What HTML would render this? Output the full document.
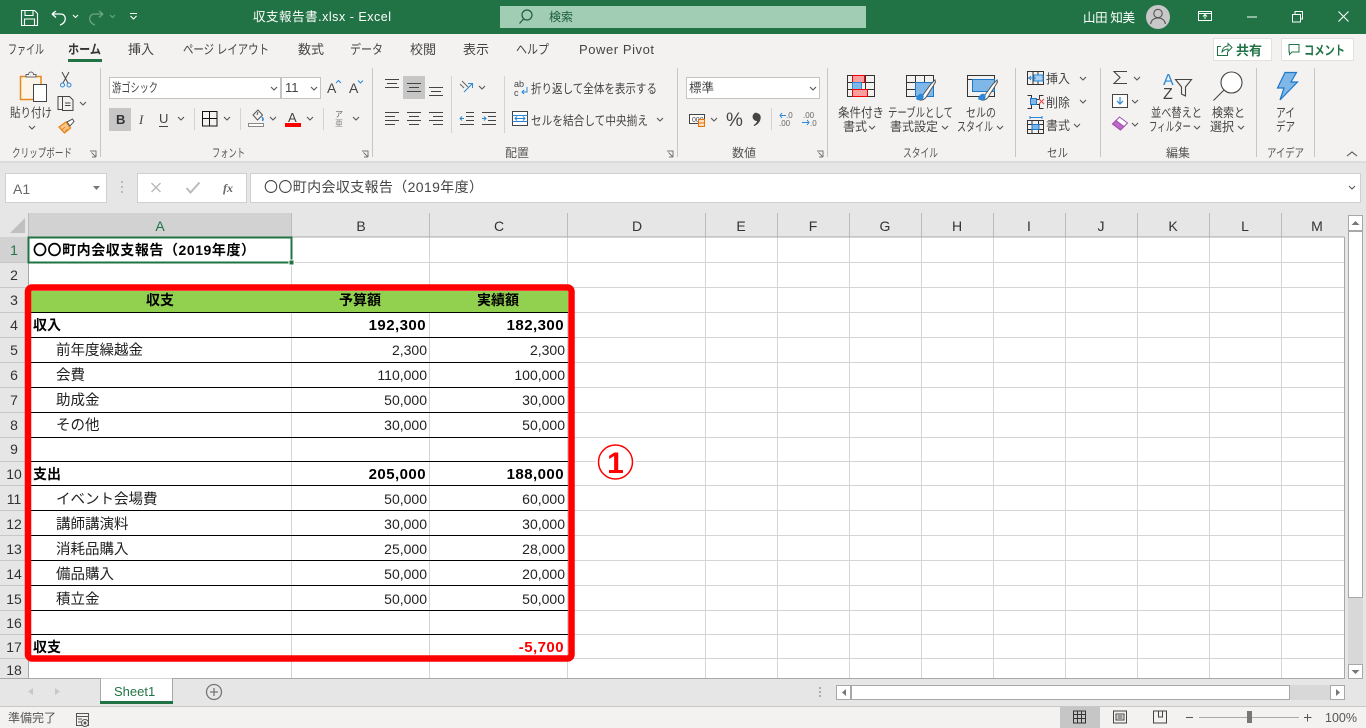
<!DOCTYPE html>
<html lang="ja"><head><meta charset="utf-8"><title>Excel</title>
<style>
html,body{margin:0;padding:0;background:#fff;width:1366px;height:728px;overflow:hidden}
svg{display:block}
text{font-family:"Liberation Sans","Noto Sans CJK JP",sans-serif;fill:#333;font-size:12px;text-spacing-trim:space-all}
.r text{font-size:12.5px;fill:#444}
.lb text{font-size:12px;fill:#555}
.tab text{font-size:13px;fill:#444}
.rn text{font-size:14px;fill:#333;text-anchor:middle}
.d text{font-size:14.5px;fill:#222}
.b text{font-size:14px;font-weight:700;fill:#000}
.n text{font-size:14px;fill:#222;text-anchor:end}
.nb text{font-size:15px;font-weight:700;fill:#000;text-anchor:end;letter-spacing:.45px}
.ic{fill:none;stroke:#444;stroke-width:1}
.ch{fill:none;stroke:#555;stroke-width:1.1}
</style></head><body>
<svg width="1366" height="728" viewBox="0 0 1366 728" xmlns="http://www.w3.org/2000/svg">
<defs>
<path id="cv" d="M0 0l3 3 3-3" class="ch"/>
<path id="lc" d="M0 0h6v6M1.500 1.500l4 4M2 6h4" fill="none" stroke="#777"/>
</defs>
<!-- backgrounds -->
<rect width="1366" height="34" fill="#217346"/>
<rect y="34" width="1366" height="127" fill="#f3f2f1"/>
<rect y="161" width="1366" height="52" fill="#e6e6e6"/>
<rect y="161" width="1366" height="2" fill="#dcdcdc"/>
<rect y="213" width="1366" height="465" fill="#e6e6e6"/>
<rect x="29" y="237" width="1315" height="441" fill="#fff"/>
<rect y="678" width="1366" height="29" fill="#e6e6e6"/>
<rect y="707" width="1366" height="21" fill="#f3f2f1"/>
<path d="M0 706.500h1366" stroke="#c8c8c8"/>

<!-- title bar -->
<g fill="none" stroke="#fff" stroke-width="1.100">
<path d="M21.500 10.500h13l3 3v12h-16zM25 10.500v5h8v-5M24.500 25v-6h10v6"/>
<path d="M52 14l4-3M52 14l4 3.500M52 14h8.500c6.500 0 6.500 9-.5 11" stroke-width="1.300"/>
<path d="M73 15l2.500 2.500L78 15"/>
<path d="M103 14l-4-3M103 14l-4 3.500M103 14h-8.500c-6.500 0-6.500 9 .5 11" stroke="#6da486" stroke-width="1.300"/>
<path d="M110 15l2.500 2.500L115 15" stroke="#6da486"/>
<path d="M130 13.500h7M130.500 16l3 3 3-3"/>
</g>
<text x="253" y="21" style="fill:#fff;font-size:12.500px" textLength="138" lengthAdjust="spacing">収支報告書.xlsx  -  Excel</text>
<rect x="500" y="6" width="366" height="22" fill="#a0cdb4"/>
<circle cx="527" cy="15" r="5" fill="none" stroke="#1f5c3b" stroke-width="1.200"/><path d="M523.500 19l-4 4.500" stroke="#1f5c3b" stroke-width="1.200"/>
<text x="549" y="21" style="fill:#1d5c3a;font-size:12px">検索</text>
<text x="1083" y="22" style="fill:#fff;font-size:12.500px" textLength="52" lengthAdjust="spacing">山田 知美</text>
<circle cx="1158" cy="17" r="12" fill="#c8c8c8"/>
<circle cx="1158" cy="13.500" r="4.200" fill="none" stroke="#555" stroke-width="1.100"/><path d="M1150.500 24c1-4.500 4-6 7.500-6s6.500 1.500 7.500 6" fill="none" stroke="#555" stroke-width="1.100"/>
<g fill="none" stroke="#fff" stroke-width="1">
<path d="M1198.500 11.500h13v9h-13zM1198.500 13.500h13M1205 19v-4M1203 16.500l2-2 2 2"/>
<path d="M1247 17h10"/>
<path d="M1292.500 14.500h8v7.500h-8zM1295 14v-2.500h7.500V19h-2"/>
<path d="M1338.500 11.500l10 10M1348.500 11.500l-10 10" stroke-width="1.100"/>
</g>

<!-- tabs -->
<g class="tab">
<text x="8" y="54" textLength="36" lengthAdjust="spacingAndGlyphs">ファイル</text>
<text x="68" y="54" textLength="33" lengthAdjust="spacingAndGlyphs" style="font-weight:700;fill:#333">ホーム</text>
<text x="128" y="54" textLength="26" lengthAdjust="spacingAndGlyphs">挿入</text>
<text x="183" y="54" textLength="86" lengthAdjust="spacingAndGlyphs">ページ レイアウト</text>
<text x="298" y="54" textLength="26" lengthAdjust="spacingAndGlyphs">数式</text>
<text x="350" y="54" textLength="33" lengthAdjust="spacingAndGlyphs">データ</text>
<text x="410" y="54" textLength="26" lengthAdjust="spacingAndGlyphs">校閲</text>
<text x="463" y="54" textLength="26" lengthAdjust="spacingAndGlyphs">表示</text>
<text x="516" y="54" textLength="33" lengthAdjust="spacingAndGlyphs">ヘルプ</text>
<text x="579" y="54" textLength="75" lengthAdjust="spacing">Power Pivot</text>
</g>
<rect x="68" y="59" width="34" height="3" fill="#217346"/>
<rect x="1213.500" y="38.500" width="58" height="22" fill="#fff" stroke="#e3e1df"/>
<path d="M1221 46.500h-3.500v9h10v-3.500M1222 52c.5-4 3-6 6-6v-2.500l4 4-4 4v-2.500c-2 0-4 1-6 3z" fill="none" stroke="#217346"/>
<text x="1236" y="55" style="fill:#217346;font-weight:700;font-size:13px">共有</text>
<rect x="1281.500" y="38.500" width="72" height="22" fill="#fff" stroke="#e3e1df"/>
<path d="M1289 44.500h10v7.500h-7l-2.500 2.500v-2.500h-.5z" fill="none" stroke="#217346"/>
<text x="1304" y="55" style="fill:#217346;font-weight:700;font-size:13px" textLength="41" lengthAdjust="spacingAndGlyphs">コメント</text>

<!-- separators -->
<g stroke="#c6c6c6">
<path d="M100.500 68v89M372.500 68v89M677.500 68v89M827.500 68v89M1015.500 68v89M1100.500 68v89M1256.500 68v89M1314.500 68v89"/>
<path d="M194.500 108v22M240.500 108v22M323.500 108v22M504.500 76v57M771.500 108v22M451.500 76v57" stroke="#d2d2d2"/>
</g>

<!-- clipboard -->
<path d="M20.500 76.500h20.500v23H20.500z" fill="#fdf4e8" stroke="#e8871e" stroke-width="1.500"/>
<path d="M26 76.500v-2h2.500a2.500 2.500 0 0 1 5 0H36v2.500H26z" fill="#f3f2f1" stroke="#666"/>
<rect x="33.500" y="84.500" width="13" height="17" fill="#fff" stroke="#444"/>
<g class="r"><text x="10" y="117" textLength="42" lengthAdjust="spacingAndGlyphs">貼り付け</text></g>
<use href="#cv" x="29" y="126"/>
<path d="M62 72l6 11M69 72l-6 11" stroke="#444" fill="none"/><circle cx="62.500" cy="85" r="2" fill="none" stroke="#2b88d8"/><circle cx="69" cy="85" r="2" fill="none" stroke="#2b88d8"/>
<path d="M62.500 96.500h-4.500v13h4M62.500 96.500h7l3.500 3.500v10.500H62.500zM65 103h5.500M65 105.500h5.500" class="ic"/>
<use href="#cv" x="80" y="102"/>
<path d="M59 127l7-5 4.500 6-6 5z" fill="#f9c68a" stroke="#e8871e" stroke-width="1.300"/><path d="M62 130l3-3M65 131.500l2.500-2.500" stroke="#e8871e"/><path d="M67 122l5.500-3 1.500 2.500-4 4.500z" fill="#fff" stroke="#555"/>
<g class="lb"><text x="12" y="157" textLength="60" lengthAdjust="spacingAndGlyphs">クリップボード</text>
<text x="212" y="157" textLength="33" lengthAdjust="spacingAndGlyphs">フォント</text>
<text x="505" y="157">配置</text>
<text x="732" y="157">数値</text>
<text x="903" y="157" textLength="35" lengthAdjust="spacingAndGlyphs">スタイル</text>
<text x="1047" y="157" textLength="21" lengthAdjust="spacingAndGlyphs">セル</text>
<text x="1166" y="157">編集</text>
<text x="1267" y="157" textLength="37" lengthAdjust="spacingAndGlyphs">アイデア</text></g>
<use href="#lc" x="90" y="151"/><use href="#lc" x="362" y="151"/><use href="#lc" x="667" y="151"/><use href="#lc" x="817" y="151"/>
<path d="M1347 156l5-4 5 4" fill="none" stroke="#555" stroke-width="1.100"/>

<!-- font -->
<rect x="109.500" y="77.500" width="171" height="21" fill="#fff" stroke="#c4c4c4"/>
<rect x="281.500" y="77.500" width="39" height="21" fill="#fff" stroke="#c4c4c4"/>
<g class="r"><text x="112" y="92" textLength="46" lengthAdjust="spacingAndGlyphs">游ゴシック</text><text x="285" y="92" style="font-size:13px">11</text></g>
<use href="#cv" x="271" y="87"/><use href="#cv" x="311" y="87"/>
<text x="327" y="93" style="font-size:14px;fill:#444">A</text><path d="M336 83l2.500-2.500L341 83" fill="none" stroke="#2b88d8"/>
<text x="349" y="93" style="font-size:14px;fill:#444">A</text><path d="M358 80.500l2.500 2.500 2.500-2.500" fill="none" stroke="#2b88d8"/>
<rect x="109" y="108" width="22" height="23" fill="#c6c6c6"/>
<text x="116" y="124" style="font-size:13px;font-weight:700;fill:#333">B</text>
<text x="139" y="124" style="font-size:13px;font-style:italic;fill:#444;font-family:'Liberation Serif',serif">I</text>
<text x="159" y="123" style="font-size:13px;fill:#444">U</text><path d="M159 126.500h9" stroke="#444"/>
<use href="#cv" x="178" y="117"/>
<path d="M202.500 111.500h14.500v14.500h-14.500zM202.500 118.500h14.500M209.500 111.500v14.500" fill="none" stroke="#111"/>
<use href="#cv" x="224" y="117"/>
<path d="M253 115l5-5 4.500 5-5 5zM257 115l1-3" fill="none" stroke="#555"/><path d="M262 117c1 1.500 2 3 0 3.500" fill="none" stroke="#2b88d8" stroke-width="1.500"/>
<rect x="248.500" y="123.500" width="15" height="3" fill="#fff" stroke="#888"/>
<use href="#cv" x="270" y="117"/>
<text x="288" y="122" style="font-size:13px;fill:#444">A</text>
<rect x="285" y="123" width="16" height="4" fill="#f00"/>
<use href="#cv" x="307" y="117"/>
<text x="335" y="117" style="font-size:8px;fill:#666">ア</text><text x="335" y="126" style="font-size:8px;fill:#888">亜</text>
<use href="#cv" x="353" y="117"/>

<!-- alignment -->
<rect x="403" y="76" width="22" height="23" fill="#c6c6c6"/>
<g stroke="#444" fill="none">
<path d="M385 79.500h14M387 83.500h10M385 87.500h14"/>
<path d="M407 83.500h14M409 87.500h10M407 91.500h14"/>
<path d="M429 87.500h14M431 91.500h10M429 95.500h14"/>
<path d="M385 112.500h14M385 116.500h10M385 120.500h14M385 124.500h10"/>
<path d="M407 112.500h14M409 116.500h10M407 120.500h14M409 124.500h10"/>
<path d="M429 112.500h14M433 116.500h10M429 120.500h14M433 124.500h10"/>
<path d="M466 112.500h8M466 116.500h8M466 120.500h8M460 124.500h14"/>
<path d="M482 112.500h14M488 116.500h8M488 120.500h8M482 124.500h14"/>
</g>
<path d="M460 118.500h4M462 116.500l-2 2 2 2M482 118.500h4M484 116.500l2 2-2 2" fill="none" stroke="#2b88d8"/>
<path d="M462 81l6 6M460 84l4 4" stroke="#666" fill="none"/><path d="M464 92l8-8M468 83.500h4.500V88" stroke="#2b88d8" fill="none"/>
<use href="#cv" x="479" y="86"/>
<text x="514" y="87" style="font-size:9px;fill:#444">ab</text><text x="514" y="96" style="font-size:9px;fill:#444">c</text>
<path d="M527 87v5h-5M524 90l-2 2 2 2" fill="none" stroke="#2b88d8"/>
<g class="r"><text x="531" y="93" textLength="126" lengthAdjust="spacingAndGlyphs">折り返して全体を表示する</text>
<text x="531" y="125" textLength="117" lengthAdjust="spacingAndGlyphs">セルを結合して中央揃え</text></g>
<rect x="512.500" y="111.500" width="15" height="14" fill="#fff" stroke="#444"/>
<path d="M512.500 115.500h15M512.500 121.500h15" stroke="#2b88d8"/><path d="M515 118.500h10M517 116.500l-2 2 2 2M523 116.500l2 2-2 2" fill="none" stroke="#2b88d8"/>
<use href="#cv" x="657" y="118"/>

<!-- number -->
<rect x="686.500" y="77.500" width="133" height="21" fill="#fff" stroke="#c4c4c4"/>
<text x="689" y="92" style="font-size:12.500px;fill:#444">標準</text>
<use href="#cv" x="810" y="87"/>
<rect x="689.500" y="114.500" width="15" height="9" fill="#fff" stroke="#444"/>
<text x="692" y="122" style="font-size:7px;fill:#444">000</text>
<rect x="698.500" y="119.500" width="6" height="7" fill="#fde0c2" stroke="#e8740c"/><path d="M698.500 123h6" stroke="#e8740c"/>
<use href="#cv" x="711" y="118"/>
<text x="726" y="126" style="font-size:19px;fill:#444">%</text>
<path d="M756.500 113a4.200 4.200 0 0 1 4.200 4.500c0 3.500-2.500 7-6.500 8.500l-.6-1c1.800-1 3.100-2.300 3.500-4a4.200 4.200 0 1 1-.6-8.500z" fill="#444"/>
<text x="786" y="118" style="font-size:8px;fill:#666">.0</text><text x="779" y="126" style="font-size:8px;fill:#666">.00</text>
<path d="M780 115.500h6M782 113l-2 2.500 2 2.500" fill="none" stroke="#2b88d8"/>
<text x="803" y="118" style="font-size:8px;fill:#666">.00</text><text x="810" y="126" style="font-size:8px;fill:#666">.0</text>
<path d="M802 122.500h7M807 120l2 2.500-2 2.500" fill="none" stroke="#2b88d8"/>

<!-- styles -->
<g fill="none" stroke="#333">
<path d="M847.500 75.500h27v21h-27zM847.500 82.500h27M847.500 89.500h27M856.500 75.500v21M865.500 75.500v21"/>
</g>
<rect x="852.500" y="75.500" width="12" height="7" fill="#f8a0a0" stroke="#e00"/><rect x="852.500" y="82.500" width="9" height="7" fill="#7fb8e8" stroke="#2b88d8"/><rect x="852.500" y="89.500" width="15" height="7" fill="#f8a0a0" stroke="#e00"/>
<g fill="none" stroke="#333"><path d="M906.500 75.500h27v21h-27zM906.500 82.500h27M906.500 89.500h27M915.500 75.500v21M924.500 75.500v21"/></g>
<rect x="915.500" y="82.500" width="18" height="14" fill="#7fb8e8" stroke="#1e78c8"/>
<path d="M920 99l11-15 4-4 .5 2-3 5-7 11c-2 2-6 3-7 1z" fill="#fff" stroke="#555"/><path d="M916 99c1-3 3-6 6-5 2 .5 2 3 1 5-1 1-5 2-7 0z" fill="#2b88d8"/>
<g fill="none" stroke="#333"><path d="M967.500 75.500h27v21h-27zM967.500 79.500h27"/></g>
<rect x="972.500" y="79.500" width="22" height="12" fill="#7fb8e8" stroke="#1e78c8"/>
<path d="M982 99l11-15 4-4 .5 2-3 5-7 11c-2 2-6 3-7 1z" fill="#fff" stroke="#555"/><path d="M978 99c1-3 3-6 6-5 2 .5 2 3 1 5-1 1-5 2-7 0z" fill="#2b88d8"/>
<g class="r">
<text x="838" y="117" textLength="46" lengthAdjust="spacingAndGlyphs">条件付き</text><text x="843" y="131" textLength="24" lengthAdjust="spacingAndGlyphs">書式</text>
<text x="888" y="117" textLength="65" lengthAdjust="spacingAndGlyphs">テーブルとして</text><text x="890" y="131" textLength="48" lengthAdjust="spacingAndGlyphs">書式設定</text>
<text x="966" y="117" textLength="30" lengthAdjust="spacingAndGlyphs">セルの</text><text x="957" y="131" textLength="36" lengthAdjust="spacingAndGlyphs">スタイル</text>
<text x="1046" y="83" textLength="24" lengthAdjust="spacingAndGlyphs">挿入</text><text x="1046" y="107" textLength="24" lengthAdjust="spacingAndGlyphs">削除</text><text x="1046" y="130" textLength="24" lengthAdjust="spacingAndGlyphs">書式</text>
<text x="1151" y="117" textLength="51" lengthAdjust="spacingAndGlyphs">並べ替えと</text><text x="1149" y="131" textLength="42" lengthAdjust="spacingAndGlyphs">フィルター</text>
<text x="1212" y="117" textLength="33" lengthAdjust="spacingAndGlyphs">検索と</text><text x="1210" y="131" textLength="24" lengthAdjust="spacingAndGlyphs">選択</text>
<text x="1276" y="117" textLength="19" lengthAdjust="spacingAndGlyphs">アイ</text><text x="1276" y="131" textLength="19" lengthAdjust="spacingAndGlyphs">デア</text>
</g>
<use href="#cv" x="869" y="126"/><use href="#cv" x="942" y="126"/><use href="#cv" x="997" y="126"/>

<!-- cells -->
<g fill="none" stroke="#333">
<path d="M1027.500 71.500h16v13h-16zM1027.500 78h16M1033 71.500v13M1038 71.500v13"/>
<path d="M1027.500 95.500h4v4h8v-4h4M1027.500 108.500h4v-4h8v4h4"/>
<path d="M1027.500 120.500h16v13h-16zM1027.500 124.500h16M1027.500 129.500h16M1032 120.500v13M1038.500 120.500v13"/>
</g>
<rect x="1034" y="75" width="9" height="6" fill="#a8cff0" stroke="#2b88d8"/><path d="M1029 78h7M1031 76l-2 2 2 2" fill="none" stroke="#2b88d8"/>
<rect x="1030.500" y="98.500" width="6" height="6" fill="#7fb8e8" stroke="#1e78c8"/><path d="M1039 99l5 5M1044 99l-5 5" stroke="#e44" fill="none"/>
<rect x="1032" y="124.500" width="7" height="5" fill="#7fb8e8" stroke="#1e78c8"/><path d="M1030 117.500h12M1030 116v3M1042 116v3" stroke="#2b88d8" fill="none"/>
<use href="#cv" x="1080" y="77"/><use href="#cv" x="1080" y="100"/><use href="#cv" x="1074" y="124"/>

<!-- editing -->
<path d="M1127 71.500h-13l6 6-6 6h13" fill="none" stroke="#444" stroke-width="1.100"/>
<use href="#cv" x="1134" y="77"/>
<rect x="1112.500" y="94.500" width="15" height="13" fill="#fff" stroke="#444"/><path d="M1120 97v7M1117 101l3 3 3-3" fill="none" stroke="#2b88d8" stroke-width="1.200"/>
<use href="#cv" x="1132" y="100"/>
<path d="M1112.500 124l7-7 8 6-7 7z" fill="#fff" stroke="#a24bb0"/><path d="M1112.500 124l3.500-3.500 8 6-3.500 3.500z" fill="#bb6ac7" stroke="#a24bb0"/>
<use href="#cv" x="1132" y="123"/>
<text x="1163" y="85" style="font-size:16px;fill:#2b88d8">A</text>
<text x="1163" y="99" style="font-size:16px;fill:#444">Z</text>
<path d="M1175.500 79.500h16l-6 7.500v9l-4-2v-7z" fill="none" stroke="#444" stroke-width="1.100"/>
<use href="#cv" x="1194" y="126"/><use href="#cv" x="1238" y="126"/>
<circle cx="1231.500" cy="82.500" r="10.500" fill="#fff" stroke="#444" stroke-width="1.100"/><path d="M1224 90l-10.500 10.500" stroke="#444" stroke-width="1.100"/>
<path d="M1285 72.500h11.500l-5.500 9.500h6.500L1280 100l4-12h-6.500z" fill="#7fb8e8" stroke="#1e78c8" stroke-width="1.200"/>

<!-- formula bar -->
<rect x="5.500" y="173.500" width="101" height="29" fill="#fff" stroke="#d0d0d0"/>
<text x="13" y="194" style="font-size:14px;fill:#666">A1</text>
<path d="M93 186h7l-3.500 4z" fill="#777"/>
<path d="M122 181v2M122 186v2M122 191v2" stroke="#aaa" stroke-width="1.500"/>
<rect x="137.500" y="173.500" width="109" height="29" fill="#fff" stroke="#d0d0d0"/>
<path d="M151.500 183l9 9M160.500 183l-9 9" stroke="#bbb" stroke-width="1.500" fill="none"/>
<path d="M186.500 188l4 4.500 9-10" stroke="#bbb" stroke-width="2" fill="none"/>
<text x="223" y="192" style="font-size:12px;font-style:italic;font-weight:700;fill:#666;font-family:'Liberation Serif',serif">fx</text>
<rect x="250.500" y="173.500" width="1110" height="29" fill="#fff" stroke="#d0d0d0"/>
<text x="264" y="192" style="font-size:14px;fill:#444" textLength="219" lengthAdjust="spacing">〇〇町内会収支報告（2019年度）</text>
<path d="M1349 186l3 3 3-3" class="ch"/>

<!-- column headers -->
<rect x="29" y="213" width="263" height="24" fill="#d2d2d2"/>
<path d="M10 233h15v-15z" fill="#c0c0c0"/>
<g stroke="#bcbcbc"><path d="M28.500 213v24M291.500 213v24M429.500 213v24M567.500 213v24M705.500 213v24M777.500 213v24M849.500 213v24M921.500 213v24M993.500 213v24M1065.500 213v24M1137.500 213v24M1209.500 213v24M1281.500 213v24"/></g>
<g class="rn">
<text x="160" y="231" style="fill:#217346">A</text><text x="361" y="231">B</text><text x="499" y="231">C</text><text x="637" y="231">D</text><text x="741" y="231">E</text><text x="813" y="231">F</text><text x="885" y="231">G</text><text x="957" y="231">H</text><text x="1029" y="231">I</text><text x="1101" y="231">J</text><text x="1173" y="231">K</text><text x="1245" y="231">L</text><text x="1317" y="231">M</text>
</g>

<!-- row headers -->
<rect x="0" y="237" width="28" height="25" fill="#d2d2d2"/>
<g stroke="#c8c8c8"><path d="M0 262.500h28M0 287.500h28M0 312.500h28M0 337.500h28M0 362.500h28M0 387.500h28M0 412.500h28M0 437.500h28M0 461.500h28M0 485.500h28M0 510.500h28M0 535.500h28M0 560.500h28M0 585.500h28M0 610.500h28M0 634.500h28M0 658.500h28"/></g>
<g class="rn">
<text x="14" y="255" style="fill:#217346">1</text><text x="14" y="280">2</text><text x="14" y="305">3</text><text x="14" y="330">4</text><text x="14" y="355">5</text><text x="14" y="380">6</text><text x="14" y="405">7</text><text x="14" y="430">8</text><text x="14" y="454">9</text><text x="14" y="479">10</text><text x="14" y="504">11</text><text x="14" y="529">12</text><text x="14" y="554">13</text><text x="14" y="579">14</text><text x="14" y="604">15</text><text x="14" y="628">16</text><text x="14" y="652">17</text><text x="14" y="675">18</text>
</g>

<!-- gridlines -->
<g stroke="#d4d4d4">
<path d="M291.500 237v441M429.500 237v441M567.500 237v441M705.500 237v441M777.500 237v441M849.500 237v441M921.500 237v441M993.500 237v441M1065.500 237v441M1137.500 237v441M1209.500 237v441M1281.500 237v441"/>
<path d="M29 262.500h1315M29 287.500h1315M29 312.500h1315M29 337.500h1315M29 362.500h1315M29 387.500h1315M29 412.500h1315M29 437.500h1315M29 461.500h1315M29 485.500h1315M29 510.500h1315M29 535.500h1315M29 560.500h1315M29 585.500h1315M29 610.500h1315M29 634.500h1315M29 658.500h1315"/>
</g>
<path d="M28.500 237h1316M1344.500 237v441M28.500 237v441M0 678.500h1345" fill="none" stroke="#a8a8a8"/>

<!-- table -->
<rect x="31" y="291" width="537" height="21" fill="#92d050"/>
<path d="M29 312.500h539M29 337.500h539M29 362.500h539M29 387.500h539M29 412.500h539M29 437.500h539M29 461.500h539M29 485.500h539M29 510.500h539M29 535.500h539M29 560.500h539M29 585.500h539M29 610.500h539M29 634.500h539" stroke="#000"/>

<g class="b">
<text x="33" y="255" textLength="222" lengthAdjust="spacing">〇〇町内会収支報告（2019年度）</text>
<text x="146" y="305">収支</text><text x="339" y="305">予算額</text><text x="477" y="305">実績額</text>
<text x="33" y="330">収入</text><text x="33" y="479">支出</text><text x="33" y="652">収支</text>
</g>
<g class="d">
<text x="56" y="355">前年度繰越金</text><text x="56" y="380">会費</text><text x="56" y="405">助成金</text><text x="56" y="430">その他</text>
<text x="56" y="504">イベント会場費</text><text x="56" y="529">講師講演料</text><text x="56" y="554">消耗品購入</text><text x="56" y="579">備品購入</text><text x="56" y="604">積立金</text>
</g>
<g class="nb">
<text x="426" y="330">192,300</text><text x="564" y="330">182,300</text>
<text x="426" y="479">205,000</text><text x="564" y="479">188,000</text>
<text x="564" y="652" style="fill:#f00">-5,700</text>
</g>
<g class="n">
<text x="427" y="355">2,300</text><text x="565" y="355">2,300</text>
<text x="427" y="380">110,000</text><text x="565" y="380">100,000</text>
<text x="427" y="405">50,000</text><text x="565" y="405">30,000</text>
<text x="427" y="430">30,000</text><text x="565" y="430">50,000</text>
<text x="427" y="504">50,000</text><text x="565" y="504">60,000</text>
<text x="427" y="529">30,000</text><text x="565" y="529">30,000</text>
<text x="427" y="554">25,000</text><text x="565" y="554">28,000</text>
<text x="427" y="579">50,000</text><text x="565" y="579">20,000</text>
<text x="427" y="604">50,000</text><text x="565" y="604">50,000</text>
</g>

<!-- selection -->
<rect x="28.500" y="237.500" width="263" height="25" fill="none" stroke="#217346" stroke-width="2"/>
<rect x="289" y="260" width="5" height="5" fill="#217346" stroke="#fff"/>

<!-- red box -->
<rect x="28" y="287.500" width="543.500" height="371" rx="4" fill="none" stroke="#f00" stroke-width="6.500"/>
<circle cx="615.500" cy="462" r="20" fill="#fff" fill-opacity=".9"/>
<circle cx="615.500" cy="462" r="17" fill="#fff" stroke="#f00" stroke-width="1.500"/>
<text x="615.500" y="473" text-anchor="middle" style="font-size:30px;font-weight:700;fill:#f00">1</text>

<!-- vertical scrollbar -->
<rect x="1348" y="215" width="15" height="449" fill="#d8d8d8"/>
<rect x="1348.500" y="215.500" width="14" height="15" fill="#fff" stroke="#a8a8a8"/>
<path d="M1351.500 225h8l-4-4z" fill="#777"/>
<rect x="1348.500" y="231.500" width="14" height="366" fill="#fff" stroke="#a8a8a8"/>
<rect x="1348.500" y="664.500" width="14" height="14" fill="#fff" stroke="#a8a8a8"/>
<path d="M1351.500 670h8l-4 4z" fill="#777"/>

<!-- sheet tabs -->
<rect x="100.500" y="678.500" width="72" height="24" fill="#fff" stroke="#a8a8a8"/>
<rect x="100" y="701" width="73" height="3" fill="#217346"/>
<path d="M101 679h71" stroke="#fff" stroke-width="1"/>
<path d="M33 688l-5 3.500 5 3.500zM55 688l5 3.500-5 3.500z" fill="#c8c8c8"/>
<text x="114" y="696" style="font-size:13px;fill:#217346">Sheet1</text>
<circle cx="214" cy="692" r="7.500" fill="none" stroke="#777" stroke-width="1.300"/><path d="M210 692h8M214 688v8" stroke="#777" stroke-width="1.300"/>
<path d="M820 687v2M820 691v2M820 695v2" stroke="#999" stroke-width="1.500"/>

<!-- horizontal scrollbar -->
<rect x="836" y="685" width="509" height="15" fill="#d8d8d8"/>
<rect x="836.500" y="685.500" width="14" height="14" fill="#fff" stroke="#a8a8a8"/>
<path d="M846 689v7l-4-3.500z" fill="#777"/>
<rect x="851.500" y="685.500" width="438" height="14" fill="#fff" stroke="#a8a8a8"/>
<rect x="1330.500" y="685.500" width="14" height="14" fill="#fff" stroke="#a8a8a8"/>
<path d="M1336 689v7l4-3.500z" fill="#777"/>

<!-- status bar -->
<text x="8" y="722" style="font-size:12px;fill:#555">準備完了</text>
<path d="M76.500 713.500h12v12h-12zM76.500 716.500h12M78 719h4M78 722h3" fill="none" stroke="#555"/><circle cx="85" cy="723" r="3.500" fill="#f3f2f1" stroke="#555"/><circle cx="85" cy="723" r="1.500" fill="#555"/>
<rect x="1060" y="707" width="40" height="21" fill="#c6c6c6"/>
<path d="M1073.500 711h12v12h-12zM1073.500 714.500h12M1073.500 718.500h12M1077.500 711v12M1081.500 711v12" fill="none" stroke="#333"/>
<path d="M1113.500 711h13v12h-13zM1116 714h8v6h-8zM1117.500 716h5M1117.500 718h5" fill="none" stroke="#444"/>
<path d="M1153.500 711h13v12h-13zM1158.500 711v6h4v-6" fill="none" stroke="#444"/>
<path d="M1186 717.500h7" stroke="#555"/>
<path d="M1199 717.500h100" stroke="#aaa"/>
<rect x="1247" y="711" width="5" height="12" fill="#777"/>
<path d="M1304 717.500h7.500M1307.500 714v7.500" stroke="#555" fill="none"/>
<text x="1325" y="722" style="font-size:12.500px;fill:#555">100%</text>
</svg>
</body></html>
